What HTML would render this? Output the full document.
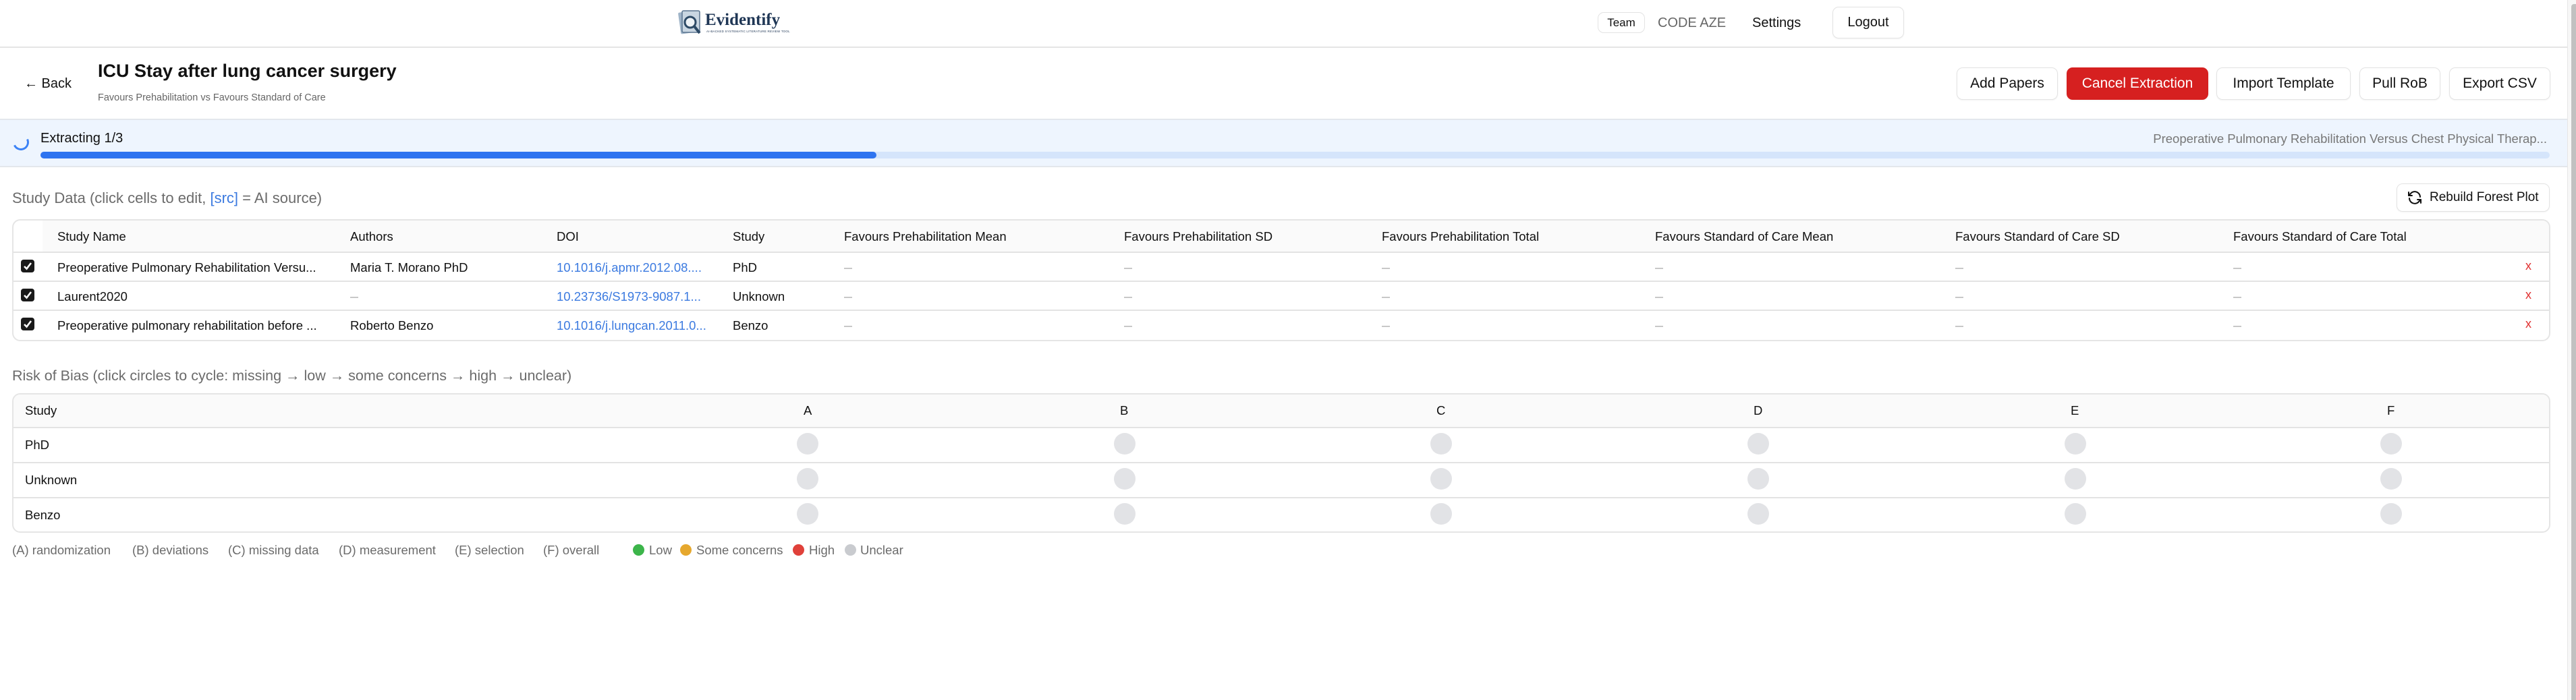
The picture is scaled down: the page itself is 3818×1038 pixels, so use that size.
<!DOCTYPE html>
<html><head><meta charset="utf-8">
<style>
*{box-sizing:border-box;margin:0;padding:0}
html,body{width:3818px;height:1038px;overflow:hidden;background:#fff;font-family:"Liberation Sans",Arial,sans-serif;color:#111}
.a{position:absolute;white-space:nowrap}
.btn{position:absolute;border:1.5px solid #e3e3e3;border-radius:9px;background:#fff;font-size:21px;display:flex;align-items:center;justify-content:center;color:#111;box-shadow:0 1px 2px rgba(0,0,0,.05)}
.hl{position:absolute;left:0;width:3805px;height:2px;background:#e5e5e5}
.th{position:absolute;font-size:18.5px;color:#111;white-space:nowrap}
.td{position:absolute;font-size:18.5px;color:#111;white-space:nowrap}
.dash{position:absolute;width:12px;height:2px;background:#c8c8c8}
.cb{position:absolute;left:31px;width:20px;height:19px;background:#1a1a1a;border-radius:4px}
.cb svg{position:absolute;left:3px;top:3px}
.x{position:absolute;left:3743px;color:#e03030;font-size:18px}
.circ{position:absolute;width:32px;height:32px;border-radius:50%;background:#e2e3e6}
.lg{position:absolute;top:805px;font-size:18.5px;color:#6b6b6b;white-space:nowrap}
.dot{position:absolute;top:807px;width:17px;height:17px;border-radius:50%}
</style></head><body>

<!-- header -->
<div class="a" style="left:1003px;top:13px;width:40px;height:40px">
<svg width="42" height="42" viewBox="0 0 42 42"><rect x="4" y="4" width="26" height="32" rx="2" fill="#9fb4c8" transform="rotate(-8 17 20)"/><rect x="8" y="3" width="26" height="32" rx="2" fill="#c9d6e2" stroke="#5a7590" stroke-width="1.5"/><circle cx="20" cy="20" r="8" fill="#eef3f7" stroke="#2d4a66" stroke-width="3"/><line x1="26" y1="26" x2="34" y2="36" stroke="#2d4a66" stroke-width="4"/></svg></div>
<div class="a" style="left:1045px;top:16px;font-family:'Liberation Serif',serif;font-weight:bold;font-size:25px;color:#1f3655">Evidentify</div>
<div class="a" style="left:1047px;top:44px;font-size:4.5px;color:#1f3655;letter-spacing:.2px">AI-BACKED SYSTEMATIC LITERATURE REVIEW TOOL</div>

<div class="a" style="left:2368px;top:18px;width:70px;height:31px;border:1.5px solid #e3e3e3;border-radius:9px;font-size:17px;display:flex;align-items:center;justify-content:center">Team</div>
<div class="a" style="left:2457px;top:23px;font-size:20px;color:#666">CODE AZE</div>
<div class="a" style="left:2597px;top:23px;font-size:20px;color:#111">Settings</div>
<div class="btn" style="left:2716px;top:10px;width:106px;height:47px;font-size:20px">Logout</div>
<div class="hl" style="top:69px"></div>

<!-- title -->
<div class="a" style="left:36px;top:113px;font-size:20px">&#8592; Back</div>
<div class="a" style="left:145px;top:90px;font-size:27px;font-weight:bold">ICU Stay after lung cancer surgery</div>
<div class="a" style="left:145px;top:137px;font-size:14.5px;color:#666">Favours Prehabilitation vs Favours Standard of Care</div>

<div class="btn" style="left:2900px;top:100px;width:150px;height:48px">Add Papers</div>
<div class="btn" style="left:3063px;top:100px;width:210px;height:48px;background:#d62020;border-color:#d62020;color:#fff">Cancel Extraction</div>
<div class="btn" style="left:3285px;top:100px;width:199px;height:48px">Import Template</div>
<div class="btn" style="left:3497px;top:100px;width:120px;height:48px">Pull RoB</div>
<div class="btn" style="left:3630px;top:100px;width:150px;height:48px">Export CSV</div>

<!-- progress banner -->
<div class="a" style="left:0;top:176px;width:3805px;height:72px;background:#eef5fe;border-top:2px solid #e3e7ec;border-bottom:2px solid #e3e7ec"></div>
<div class="a" style="left:19px;top:199px;width:24px;height:24px;border-radius:50%;border:3px solid transparent;border-right-color:#3b82f6;border-bottom-color:#3b82f6;transform:rotate(20deg)"></div>
<div class="a" style="left:60px;top:194px;font-size:20px;color:#111">Extracting 1/3</div>
<div class="a" style="left:60px;top:225px;width:3719px;height:10px;border-radius:5px;background:#d5e5fb"></div>
<div class="a" style="left:60px;top:225px;width:1239px;height:10px;border-radius:5px;background:#2f74f0"></div>
<div class="a" style="right:43px;top:195px;font-size:18.5px;color:#777">Preoperative Pulmonary Rehabilitation Versus Chest Physical Therap...</div>

<!-- study data -->
<div class="a" style="left:18px;top:281px;font-size:22px;color:#6b6b6b">Study Data (click cells to edit, <span style="color:#3b7ae0">[src]</span> = AI source)</div>
<div class="btn" style="left:3552px;top:272px;width:227px;height:42px;font-size:19px;justify-content:flex-start;padding-left:14px">
<svg width="24" height="24" viewBox="0 0 24 24" fill="none" stroke="#111" stroke-width="2" stroke-linecap="round" stroke-linejoin="round" style="margin-right:10px"><path d="M20 11a8 8 0 0 0-14.5-4.5L3 9"/><path d="M3 4v5h5"/><path d="M4 13a8 8 0 0 0 14.5 4.5L21 15"/><path d="M21 20v-5h-5"/></svg>Rebuild Forest Plot</div>

<div class="a" style="left:18px;top:325px;width:3762px;height:181px;border:2px solid #e5e5e5;border-radius:12px;overflow:hidden">
 <div style="position:absolute;left:43px;top:0;width:3720px;height:47px;background:#fafafa"></div>
 <div style="position:absolute;left:0;top:46px;width:100%;height:2px;background:#e3e3e3"></div>
 <div style="position:absolute;left:0;top:89px;width:100%;height:2px;background:#e3e3e3"></div>
 <div style="position:absolute;left:0;top:132px;width:100%;height:2px;background:#e3e3e3"></div>
</div>
<div class="th" style="left:85px;top:340px">Study Name</div>
<div class="th" style="left:519px;top:340px">Authors</div>
<div class="th" style="left:825px;top:340px">DOI</div>
<div class="th" style="left:1086px;top:340px">Study</div>
<div class="th" style="left:1251px;top:340px">Favours Prehabilitation Mean</div>
<div class="th" style="left:1666px;top:340px">Favours Prehabilitation SD</div>
<div class="th" style="left:2048px;top:340px">Favours Prehabilitation Total</div>
<div class="th" style="left:2453px;top:340px">Favours Standard of Care Mean</div>
<div class="th" style="left:2898px;top:340px">Favours Standard of Care SD</div>
<div class="th" style="left:3310px;top:340px">Favours Standard of Care Total</div>

<!-- rows -->
<div class="cb" style="top:385px"><svg width="14" height="13" viewBox="0 0 14 13"><path d="M2 7l3.5 3.5L12 2" stroke="#fff" stroke-width="2.6" fill="none"/></svg></div>
<div class="td" style="left:85px;top:386px">Preoperative Pulmonary Rehabilitation Versu...</div>
<div class="td" style="left:519px;top:386px">Maria T. Morano PhD</div>
<div class="td" style="left:825px;top:386px;color:#3b7ae0">10.1016/j.apmr.2012.08....</div>
<div class="td" style="left:1086px;top:386px">PhD</div>

<div class="cb" style="top:428px"><svg width="14" height="13" viewBox="0 0 14 13"><path d="M2 7l3.5 3.5L12 2" stroke="#fff" stroke-width="2.6" fill="none"/></svg></div>
<div class="td" style="left:85px;top:429px">Laurent2020</div>
<div class="dash" style="left:519px;top:440px"></div>
<div class="td" style="left:825px;top:429px;color:#3b7ae0">10.23736/S1973-9087.1...</div>
<div class="td" style="left:1086px;top:429px">Unknown</div>

<div class="cb" style="top:471px"><svg width="14" height="13" viewBox="0 0 14 13"><path d="M2 7l3.5 3.5L12 2" stroke="#fff" stroke-width="2.6" fill="none"/></svg></div>
<div class="td" style="left:85px;top:472px">Preoperative pulmonary rehabilitation before ...</div>
<div class="td" style="left:519px;top:472px">Roberto Benzo</div>
<div class="td" style="left:825px;top:472px;color:#3b7ae0">10.1016/j.lungcan.2011.0...</div>
<div class="td" style="left:1086px;top:472px">Benzo</div>

<div class="dash" style="left:1251px;top:397px"></div><div class="dash" style="left:1666px;top:397px"></div><div class="dash" style="left:2048px;top:397px"></div><div class="dash" style="left:2453px;top:397px"></div><div class="dash" style="left:2898px;top:397px"></div><div class="dash" style="left:3310px;top:397px"></div>
<div class="dash" style="left:1251px;top:440px"></div><div class="dash" style="left:1666px;top:440px"></div><div class="dash" style="left:2048px;top:440px"></div><div class="dash" style="left:2453px;top:440px"></div><div class="dash" style="left:2898px;top:440px"></div><div class="dash" style="left:3310px;top:440px"></div>
<div class="dash" style="left:1251px;top:483px"></div><div class="dash" style="left:1666px;top:483px"></div><div class="dash" style="left:2048px;top:483px"></div><div class="dash" style="left:2453px;top:483px"></div><div class="dash" style="left:2898px;top:483px"></div><div class="dash" style="left:3310px;top:483px"></div>
<div class="x" style="top:384px">x</div><div class="x" style="top:427px">x</div><div class="x" style="top:470px">x</div>

<!-- risk of bias -->
<div class="a" style="left:18px;top:545px;font-size:21.5px;color:#6b6b6b">Risk of Bias (click circles to cycle: missing &#8594; low &#8594; some concerns &#8594; high &#8594; unclear)</div>
<div class="a" style="left:18px;top:583px;width:3762px;height:207px;border:2px solid #e5e5e5;border-radius:12px;overflow:hidden">
 <div style="position:absolute;left:0;top:0;width:100%;height:48px;background:#fafafa"></div>
 <div style="position:absolute;left:0;top:48px;width:100%;height:2px;background:#e3e3e3"></div>
 <div style="position:absolute;left:0;top:100px;width:100%;height:2px;background:#e3e3e3"></div>
 <div style="position:absolute;left:0;top:152px;width:100%;height:2px;background:#e3e3e3"></div>
</div>
<div class="th" style="left:37px;top:598px">Study</div>
<div class="th" style="left:1191px;top:598px">A</div>
<div class="th" style="left:1660px;top:598px">B</div>
<div class="th" style="left:2129px;top:598px">C</div>
<div class="th" style="left:2599px;top:598px">D</div>
<div class="th" style="left:3069px;top:598px">E</div>
<div class="th" style="left:3538px;top:598px">F</div>
<div class="td" style="left:37px;top:649px">PhD</div>
<div class="td" style="left:37px;top:701px">Unknown</div>
<div class="td" style="left:37px;top:753px">Benzo</div>

<div class="circ" style="left:1181px;top:642px"></div><div class="circ" style="left:1651px;top:642px"></div><div class="circ" style="left:2120px;top:642px"></div><div class="circ" style="left:2590px;top:642px"></div><div class="circ" style="left:3060px;top:642px"></div><div class="circ" style="left:3528px;top:642px"></div>
<div class="circ" style="left:1181px;top:694px"></div><div class="circ" style="left:1651px;top:694px"></div><div class="circ" style="left:2120px;top:694px"></div><div class="circ" style="left:2590px;top:694px"></div><div class="circ" style="left:3060px;top:694px"></div><div class="circ" style="left:3528px;top:694px"></div>
<div class="circ" style="left:1181px;top:746px"></div><div class="circ" style="left:1651px;top:746px"></div><div class="circ" style="left:2120px;top:746px"></div><div class="circ" style="left:2590px;top:746px"></div><div class="circ" style="left:3060px;top:746px"></div><div class="circ" style="left:3528px;top:746px"></div>

<div class="lg" style="left:18px">(A) randomization</div>
<div class="lg" style="left:196px">(B) deviations</div>
<div class="lg" style="left:338px">(C) missing data</div>
<div class="lg" style="left:502px">(D) measurement</div>
<div class="lg" style="left:674px">(E) selection</div>
<div class="lg" style="left:805px">(F) overall</div>
<div class="dot" style="left:938px;background:#3cb54a"></div><div class="lg" style="left:962px">Low</div>
<div class="dot" style="left:1008px;background:#e6a82e"></div><div class="lg" style="left:1032px">Some concerns</div>
<div class="dot" style="left:1175px;background:#e0413a"></div><div class="lg" style="left:1199px">High</div>
<div class="dot" style="left:1252px;background:#c9cbcf"></div><div class="lg" style="left:1275px">Unclear</div>

<!-- scrollbar -->
<div class="a" style="left:3805px;top:0;width:13px;height:1038px;background:#f7f7f7;border-left:1px solid #e6e6e6"></div>
<div class="a" style="left:3811px;top:6px;width:7px;height:1032px;background:#c1c1c1;border-radius:4px 0 0 0"></div>
</body></html>
